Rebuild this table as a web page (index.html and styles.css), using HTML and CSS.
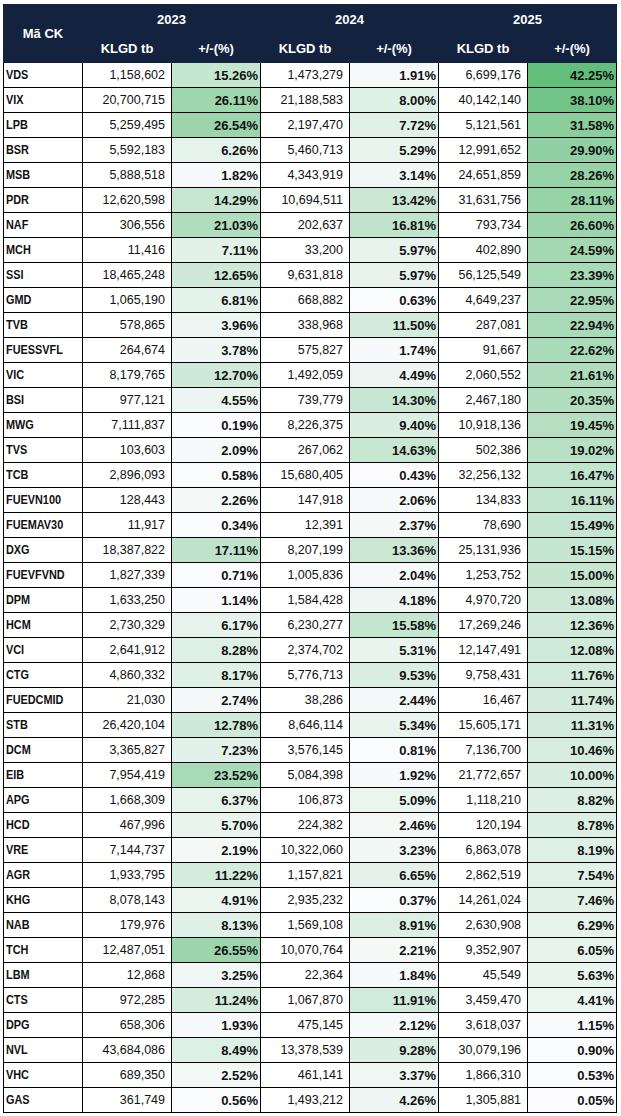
FILE: index.html
```html
<!DOCTYPE html>
<html lang="vi">
<head>
<meta charset="utf-8">
<title>KLGD tb</title>
<link rel="stylesheet" href="styles.css">
</head>
<body>
<table class="grid">
<colgroup>
<col class="c-code"><col class="c-vol"><col class="c-pct"><col class="c-vol"><col class="c-pct"><col class="c-vol"><col class="c-pct2">
</colgroup>
<thead>
<tr class="hrow">
<th rowspan="2" class="h-code">Mã CK</th>
<th colspan="2">2023</th>
<th colspan="2">2024</th>
<th colspan="2">2025</th>
</tr>
<tr class="hrow">
<th>KLGD tb</th><th>+/-(%)</th>
<th>KLGD tb</th><th>+/-(%)</th>
<th>KLGD tb</th><th>+/-(%)</th>
</tr>
</thead>
<tbody>
<tr><td class="code"><span class="tk">VDS</span></td><td class="vol">1,158,602</td><td class="pct">15.26%</td><td class="vol">1,473,279</td><td class="pct">1.91%</td><td class="vol">6,699,176</td><td class="pct">42.25%</td></tr>
<tr><td class="code"><span class="tk">VIX</span></td><td class="vol">20,700,715</td><td class="pct">26.11%</td><td class="vol">21,188,583</td><td class="pct">8.00%</td><td class="vol">40,142,140</td><td class="pct">38.10%</td></tr>
<tr><td class="code"><span class="tk">LPB</span></td><td class="vol">5,259,495</td><td class="pct">26.54%</td><td class="vol">2,197,470</td><td class="pct">7.72%</td><td class="vol">5,121,561</td><td class="pct">31.58%</td></tr>
<tr><td class="code"><span class="tk">BSR</span></td><td class="vol">5,592,183</td><td class="pct">6.26%</td><td class="vol">5,460,713</td><td class="pct">5.29%</td><td class="vol">12,991,652</td><td class="pct">29.90%</td></tr>
<tr><td class="code"><span class="tk">MSB</span></td><td class="vol">5,888,518</td><td class="pct">1.82%</td><td class="vol">4,343,919</td><td class="pct">3.14%</td><td class="vol">24,651,859</td><td class="pct">28.26%</td></tr>
<tr><td class="code"><span class="tk">PDR</span></td><td class="vol">12,620,598</td><td class="pct">14.29%</td><td class="vol">10,694,511</td><td class="pct">13.42%</td><td class="vol">31,631,756</td><td class="pct">28.11%</td></tr>
<tr><td class="code"><span class="tk">NAF</span></td><td class="vol">306,556</td><td class="pct">21.03%</td><td class="vol">202,637</td><td class="pct">16.81%</td><td class="vol">793,734</td><td class="pct">26.60%</td></tr>
<tr><td class="code"><span class="tk">MCH</span></td><td class="vol">11,416</td><td class="pct">7.11%</td><td class="vol">33,200</td><td class="pct">5.97%</td><td class="vol">402,890</td><td class="pct">24.59%</td></tr>
<tr><td class="code"><span class="tk">SSI</span></td><td class="vol">18,465,248</td><td class="pct">12.65%</td><td class="vol">9,631,818</td><td class="pct">5.97%</td><td class="vol">56,125,549</td><td class="pct">23.39%</td></tr>
<tr><td class="code"><span class="tk">GMD</span></td><td class="vol">1,065,190</td><td class="pct">6.81%</td><td class="vol">668,882</td><td class="pct">0.63%</td><td class="vol">4,649,237</td><td class="pct">22.95%</td></tr>
<tr><td class="code"><span class="tk">TVB</span></td><td class="vol">578,865</td><td class="pct">3.96%</td><td class="vol">338,968</td><td class="pct">11.50%</td><td class="vol">287,081</td><td class="pct">22.94%</td></tr>
<tr><td class="code"><span class="tk">FUESSVFL</span></td><td class="vol">264,674</td><td class="pct">3.78%</td><td class="vol">575,827</td><td class="pct">1.74%</td><td class="vol">91,667</td><td class="pct">22.62%</td></tr>
<tr><td class="code"><span class="tk">VIC</span></td><td class="vol">8,179,765</td><td class="pct">12.70%</td><td class="vol">1,492,059</td><td class="pct">4.49%</td><td class="vol">2,060,552</td><td class="pct">21.61%</td></tr>
<tr><td class="code"><span class="tk">BSI</span></td><td class="vol">977,121</td><td class="pct">4.55%</td><td class="vol">739,779</td><td class="pct">14.30%</td><td class="vol">2,467,180</td><td class="pct">20.35%</td></tr>
<tr><td class="code"><span class="tk">MWG</span></td><td class="vol">7,111,837</td><td class="pct">0.19%</td><td class="vol">8,226,375</td><td class="pct">9.40%</td><td class="vol">10,918,136</td><td class="pct">19.45%</td></tr>
<tr><td class="code"><span class="tk">TVS</span></td><td class="vol">103,603</td><td class="pct">2.09%</td><td class="vol">267,062</td><td class="pct">14.63%</td><td class="vol">502,386</td><td class="pct">19.02%</td></tr>
<tr><td class="code"><span class="tk">TCB</span></td><td class="vol">2,896,093</td><td class="pct">0.58%</td><td class="vol">15,680,405</td><td class="pct">0.43%</td><td class="vol">32,256,132</td><td class="pct">16.47%</td></tr>
<tr><td class="code"><span class="tk">FUEVN100</span></td><td class="vol">128,443</td><td class="pct">2.26%</td><td class="vol">147,918</td><td class="pct">2.06%</td><td class="vol">134,833</td><td class="pct">16.11%</td></tr>
<tr><td class="code"><span class="tk">FUEMAV30</span></td><td class="vol">11,917</td><td class="pct">0.34%</td><td class="vol">12,391</td><td class="pct">2.37%</td><td class="vol">78,690</td><td class="pct">15.49%</td></tr>
<tr><td class="code"><span class="tk">DXG</span></td><td class="vol">18,387,822</td><td class="pct">17.11%</td><td class="vol">8,207,199</td><td class="pct">13.36%</td><td class="vol">25,131,936</td><td class="pct">15.15%</td></tr>
<tr><td class="code"><span class="tk">FUEVFVND</span></td><td class="vol">1,827,339</td><td class="pct">0.71%</td><td class="vol">1,005,836</td><td class="pct">2.04%</td><td class="vol">1,253,752</td><td class="pct">15.00%</td></tr>
<tr><td class="code"><span class="tk">DPM</span></td><td class="vol">1,633,250</td><td class="pct">1.14%</td><td class="vol">1,584,428</td><td class="pct">4.18%</td><td class="vol">4,970,720</td><td class="pct">13.08%</td></tr>
<tr><td class="code"><span class="tk">HCM</span></td><td class="vol">2,730,329</td><td class="pct">6.17%</td><td class="vol">6,230,277</td><td class="pct">15.58%</td><td class="vol">17,269,246</td><td class="pct">12.36%</td></tr>
<tr><td class="code"><span class="tk">VCI</span></td><td class="vol">2,641,912</td><td class="pct">8.28%</td><td class="vol">2,374,702</td><td class="pct">5.31%</td><td class="vol">12,147,491</td><td class="pct">12.08%</td></tr>
<tr><td class="code"><span class="tk">CTG</span></td><td class="vol">4,860,332</td><td class="pct">8.17%</td><td class="vol">5,776,713</td><td class="pct">9.53%</td><td class="vol">9,758,431</td><td class="pct">11.76%</td></tr>
<tr><td class="code"><span class="tk">FUEDCMID</span></td><td class="vol">21,030</td><td class="pct">2.74%</td><td class="vol">38,286</td><td class="pct">2.44%</td><td class="vol">16,467</td><td class="pct">11.74%</td></tr>
<tr><td class="code"><span class="tk">STB</span></td><td class="vol">26,420,104</td><td class="pct">12.78%</td><td class="vol">8,646,114</td><td class="pct">5.34%</td><td class="vol">15,605,171</td><td class="pct">11.31%</td></tr>
<tr><td class="code"><span class="tk">DCM</span></td><td class="vol">3,365,827</td><td class="pct">7.23%</td><td class="vol">3,576,145</td><td class="pct">0.81%</td><td class="vol">7,136,700</td><td class="pct">10.46%</td></tr>
<tr><td class="code"><span class="tk">EIB</span></td><td class="vol">7,954,419</td><td class="pct">23.52%</td><td class="vol">5,084,398</td><td class="pct">1.92%</td><td class="vol">21,772,657</td><td class="pct">10.00%</td></tr>
<tr><td class="code"><span class="tk">APG</span></td><td class="vol">1,668,309</td><td class="pct">6.37%</td><td class="vol">106,873</td><td class="pct">5.09%</td><td class="vol">1,118,210</td><td class="pct">8.82%</td></tr>
<tr><td class="code"><span class="tk">HCD</span></td><td class="vol">467,996</td><td class="pct">5.70%</td><td class="vol">224,382</td><td class="pct">2.46%</td><td class="vol">120,194</td><td class="pct">8.78%</td></tr>
<tr><td class="code"><span class="tk">VRE</span></td><td class="vol">7,144,737</td><td class="pct">2.19%</td><td class="vol">10,322,060</td><td class="pct">3.23%</td><td class="vol">6,863,078</td><td class="pct">8.19%</td></tr>
<tr><td class="code"><span class="tk">AGR</span></td><td class="vol">1,933,795</td><td class="pct">11.22%</td><td class="vol">1,157,821</td><td class="pct">6.65%</td><td class="vol">2,862,519</td><td class="pct">7.54%</td></tr>
<tr><td class="code"><span class="tk">KHG</span></td><td class="vol">8,078,143</td><td class="pct">4.91%</td><td class="vol">2,935,232</td><td class="pct">0.37%</td><td class="vol">14,261,024</td><td class="pct">7.46%</td></tr>
<tr><td class="code"><span class="tk">NAB</span></td><td class="vol">179,976</td><td class="pct">8.13%</td><td class="vol">1,569,108</td><td class="pct">8.91%</td><td class="vol">2,630,908</td><td class="pct">6.29%</td></tr>
<tr><td class="code"><span class="tk">TCH</span></td><td class="vol">12,487,051</td><td class="pct">26.55%</td><td class="vol">10,070,764</td><td class="pct">2.21%</td><td class="vol">9,352,907</td><td class="pct">6.05%</td></tr>
<tr><td class="code"><span class="tk">LBM</span></td><td class="vol">12,868</td><td class="pct">3.25%</td><td class="vol">22,364</td><td class="pct">1.84%</td><td class="vol">45,549</td><td class="pct">5.63%</td></tr>
<tr><td class="code"><span class="tk">CTS</span></td><td class="vol">972,285</td><td class="pct">11.24%</td><td class="vol">1,067,870</td><td class="pct">11.91%</td><td class="vol">3,459,470</td><td class="pct">4.41%</td></tr>
<tr><td class="code"><span class="tk">DPG</span></td><td class="vol">658,306</td><td class="pct">1.93%</td><td class="vol">475,145</td><td class="pct">2.12%</td><td class="vol">3,618,037</td><td class="pct">1.15%</td></tr>
<tr><td class="code"><span class="tk">NVL</span></td><td class="vol">43,684,086</td><td class="pct">8.49%</td><td class="vol">13,378,539</td><td class="pct">9.28%</td><td class="vol">30,079,196</td><td class="pct">0.90%</td></tr>
<tr><td class="code"><span class="tk">VHC</span></td><td class="vol">689,350</td><td class="pct">2.52%</td><td class="vol">461,141</td><td class="pct">3.37%</td><td class="vol">1,866,310</td><td class="pct">0.53%</td></tr>
<tr><td class="code"><span class="tk">GAS</span></td><td class="vol">361,749</td><td class="pct">0.56%</td><td class="vol">1,493,212</td><td class="pct">4.26%</td><td class="vol">1,305,881</td><td class="pct">0.05%</td></tr>
</tbody>
</table>
<script src="script.js"></script>
</body>
</html>
```

FILE: styles.css
```css
html, body {
  margin: 0;
  padding: 0;
  background: #ffffff;
}

body {
  padding: 4px 0 0 3px;
  font-family: "Liberation Sans", Arial, sans-serif;
  color: #111111;
}

.grid {
  border-collapse: collapse;
  table-layout: fixed;
  width: 614px;
}

.c-code { width: 79px; }
.c-vol { width: 89px; }
.c-pct { width: 89px; }
.c-pct2 { width: 89px; }

.hrow {
  height: 29px;
}

.hrow th {
  background: #13233f;
  color: #ffffff;
  font-weight: bold;
  font-size: 13px;
  text-align: center;
  padding: 0;
  border: 1px solid #13233f;
}

tbody tr {
  height: 25px;
}

tbody td {
  border: 1px solid #000000;
  padding: 0;
  white-space: nowrap;
  overflow: hidden;
}

.code {
  font-weight: bold;
  font-size: 12.5px;
  padding-left: 2px;
  text-align: left;
}

.tk {
  display: inline-block;
  transform: scaleX(0.87);
  transform-origin: left center;
}

.vol {
  font-size: 12.5px;
  text-align: right;
  padding-right: 6px;
}

.pct {
  font-size: 13px;
  font-weight: bold;
  text-align: right;
  padding-right: 2px;
}
```

FILE: script.js
```js
(function () {
  var cells = document.querySelectorAll('td.pct');
  var vals = [];
  var i;
  for (i = 0; i < cells.length; i++) {
    vals.push(parseFloat(cells[i].textContent));
  }
  var min = Math.min.apply(null, vals);
  var max = Math.max.apply(null, vals);
  var lo = [252, 252, 255];
  var hi = [99, 190, 123];
  for (i = 0; i < cells.length; i++) {
    var t = max > min ? (vals[i] - min) / (max - min) : 0;
    var c = [];
    for (var k = 0; k < 3; k++) {
      c.push(Math.round(lo[k] + (hi[k] - lo[k]) * t));
    }
    cells[i].style.backgroundColor = 'rgb(' + c.join(',') + ')';
  }
})();
```
